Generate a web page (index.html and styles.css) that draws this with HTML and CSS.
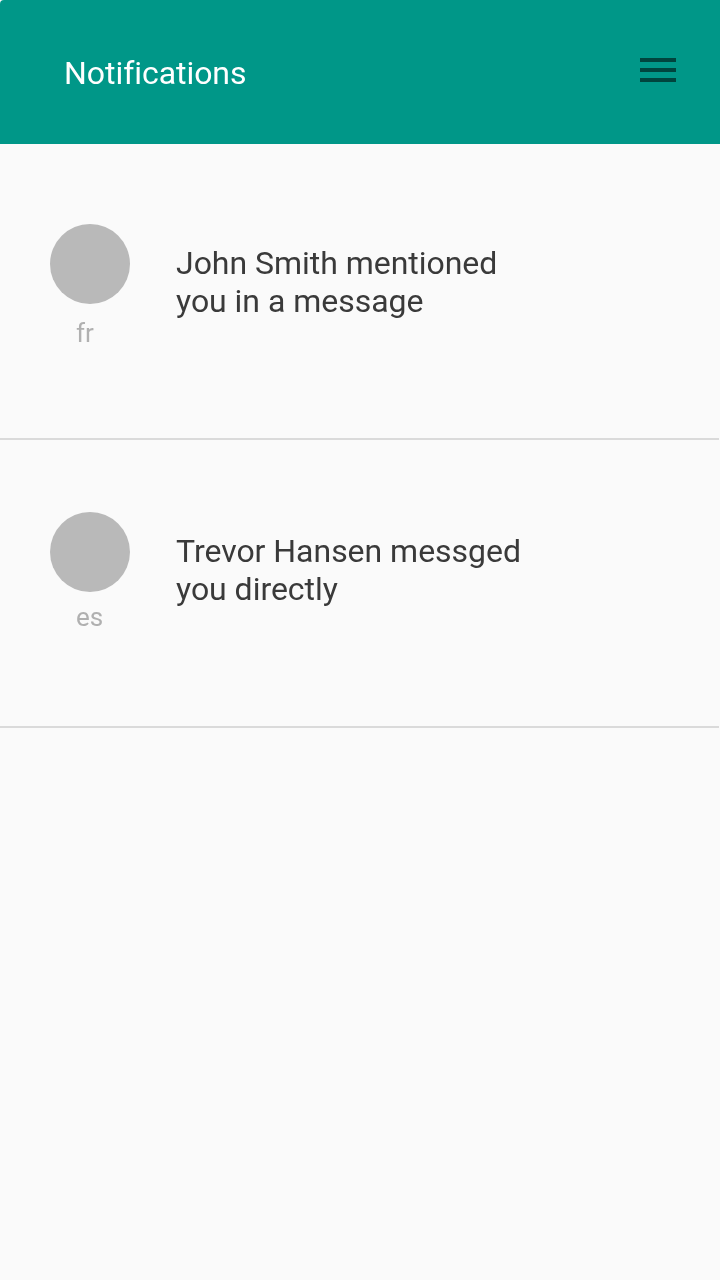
FILE: index.html
```html
<!DOCTYPE html>
<html lang="en">
<head>
<meta charset="utf-8">
<title>Notifications</title>
<link rel="stylesheet" href="styles.css">
</head>
<body>
<header class="app-bar">
  <h1 class="title">Notifications</h1>
  <svg class="menu" width="36" height="24" viewBox="0 0 36 24" role="img" aria-label="Menu"><path d="M0 0h36v4H0zM0 10h36v4H0zM0 20h36v4H0z"/></svg>
</header>
<main class="list">
  <article class="item">
    <div class="sender"><div class="avatar"></div><span class="lang">fr</span></div>
    <p class="message">John Smith mentioned<br>you in a message</p>
  </article>
  <article class="item">
    <div class="sender"><div class="avatar"></div><span class="lang lang-es">es</span></div>
    <p class="message">Trevor Hansen messged<br>you directly</p>
  </article>
</main>
</body>
</html>
```
FILE: styles.css
```css
* { box-sizing: border-box; }
body {
  margin: 0;
  min-height: 1280px;
  background: #fafafa;
  font-family: Roboto, sans-serif;
  font-variant-ligatures: none;
}
.app-bar {
  display: flex;
  justify-content: space-between;
  align-items: flex-start;
  height: 144px;
  padding: 54px 44px 0 64px;
  background: #009788;
  border-top-left-radius: 4px;
}
.title {
  margin: 0;
  color: #fff;
  font-size: 32px;
  font-weight: 400;
  line-height: 38px;
  letter-spacing: -0.05px;
  will-change: transform;
}
.menu { margin-top: 4px; fill: #00453e; }
.list { padding-top: 8px; }
.item {
  display: flex;
  gap: 46px;
  height: 288px;
  padding: 72px 50px 0;
  margin-right: 1px;
  border-bottom: 2px solid #dadada;
}
.sender { width: 80px; }
.avatar {
  width: 80px;
  height: 80px;
  border-radius: 50%;
  background: #b9b9b9;
}
.lang {
  display: block;
  margin: 14px 0 0 26px;
  color: #b0b0b0;
  font-size: 26px;
  line-height: 30px;
  letter-spacing: -0.1px;
  will-change: transform;
}
.lang-es { margin-top: 10px; }
.message {
  margin: 20px 0 0;
  color: #3a3a3a;
  font-size: 32px;
  line-height: 38px;
  letter-spacing: -0.03px;
  will-change: transform;
}
```
